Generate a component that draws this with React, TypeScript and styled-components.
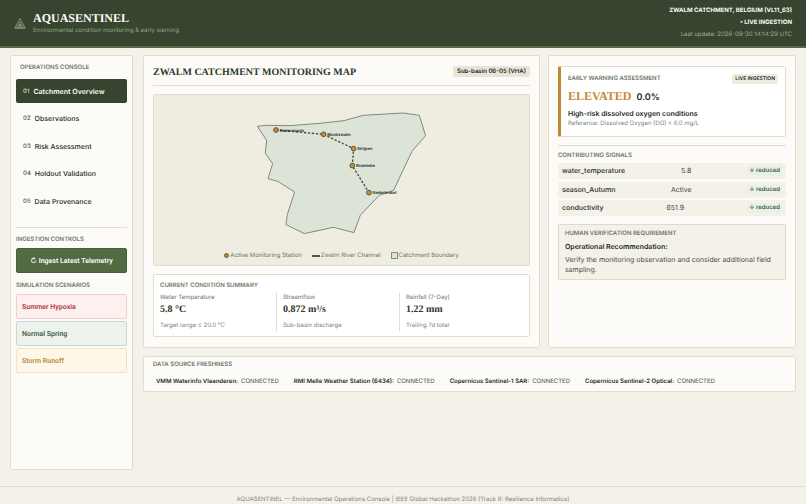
import React from "react";
import styled, { createGlobalStyle, css } from "styled-components";

const sans = `Inter, "Open Sans", "Liberation Sans", sans-serif`;
const serif = `"Liberation Serif", "DejaVu Serif", serif`;

const GlobalStyle = createGlobalStyle`
  *, *::before, *::after { box-sizing: border-box; }
  body {
    margin: 0;
    background: #f4f1e8;
    color: #202b23;
    font-family: ${sans};
    font-size: 7px;
    line-height: 10px;
    text-rendering: geometricPrecision;
  }
  h1, h2, h3, p, ul, dl, dd { margin: 0; padding: 0; }
  button { font-family: inherit; cursor: pointer; text-rendering: inherit; }
`;

const Page = styled.div`
  min-height: 100vh;
  display: flex;
  flex-direction: column;
`;

const Header = styled.header`
  display: flex;
  justify-content: space-between;
  align-items: center;
  height: 48px;
  padding: 0 14px;
  background: #374530;
  border-bottom: 2px solid #566b45;
`;

const Brand = styled.div`
  display: flex;
  align-items: center;
  gap: 7px;
`;

const BrandName = styled.h1`
  font: 700 12px/15px ${serif};
  color: #fcfbf7;
`;

const Tagline = styled.p`
  color: #8ea57c;
  font-size: 6px;
`;

const HeaderStatus = styled.div`
  display: flex;
  flex-direction: column;
  gap: 2px;
  text-align: right;
  color: #fcfbf7;
  font-size: 6px;
  font-weight: 700;
`;

const Updated = styled.span`
  color: #a3b094;
  font-weight: 400;
`;

const Main = styled.main`
  flex: 1;
  display: grid;
  grid-template-columns: 123px minmax(0, 1fr);
  gap: 10px;
  padding: 7px 10px 16px;
`;

const card = css`
  background: #fcfbf7;
  border: 1px solid #e2decf;
  border-radius: 2px;
`;

const Sidebar = styled.aside`
  ${card}
  padding: 7px 5px;
`;

const Label = styled.h3<{ $inset?: boolean }>`
  font-size: 6px;
  line-height: 10px;
  font-weight: 600;
  color: #6d7468;
  text-transform: uppercase;
  padding-left: ${(p) => (p.$inset ? 4 : 0)}px;
`;

const Nav = styled.nav`
  display: flex;
  flex-direction: column;
  justify-content: space-between;
  min-height: 134px;
  margin: 6px 0 14px;
`;

const NavItem = styled.button<{ $active?: boolean }>`
  display: flex;
  align-items: center;
  gap: 4px;
  height: 24px;
  padding: 0 7px;
  border: 0;
  border-radius: 2px;
  background: ${(p) => (p.$active ? "#374530" : "transparent")};
  color: ${(p) => (p.$active ? "#fcfbf7" : "#202b23")};
  font-size: 7px;
  font-weight: ${(p) => (p.$active ? 600 : 500)};
`;

const NavIndex = styled.span`
  font-size: 6px;
  font-weight: 500;
  opacity: 0.8;
`;

const Section = styled.section`
  display: flex;
  flex-direction: column;
  gap: 3px;
`;

const Controls = styled.div`
  display: flex;
  flex-direction: column;
  gap: 8px;
  padding-top: 7px;
  border-top: 1px solid #e2decf;
`;

const PrimaryButton = styled.button`
  height: 25px;
  border: 1px solid #46603a;
  border-radius: 2px;
  background: #536b43;
  color: #fcfbf7;
  font: 600 7px/10px Roboto, ${sans};
`;

const tones = {
  red: ["#fdf0ee", "#f3cfcc", "#b23a3e"],
  green: ["#edf2ec", "#c9d9cb", "#3f6346"],
  amber: ["#fdf7ea", "#f3e3c1", "#c08a3e"],
};

const Scenarios = styled.div`
  display: flex;
  flex-direction: column;
  gap: 2px;
`;

const ScenarioButton = styled.button<{ $tone: keyof typeof tones }>`
  height: 25px;
  padding: 0 5px;
  text-align: left;
  background: ${(p) => tones[p.$tone][0]};
  border: 1px solid ${(p) => tones[p.$tone][1]};
  border-radius: 2px;
  color: ${(p) => tones[p.$tone][2]};
  font: 600 7px/10px Roboto, ${sans};
`;

const Content = styled.div`
  display: grid;
  grid-template-columns: minmax(0, 1.6fr) minmax(0, 1fr);
  gap: 8px;
  align-content: start;
`;

const Panel = styled.section`
  ${card}
  display: flex;
  flex-direction: column;
  gap: 8px;
  padding: 10px 9px;
`;

const PanelHead = styled.div`
  display: flex;
  justify-content: space-between;
  align-items: flex-start;
  padding-bottom: 5px;
  border-bottom: 1px solid #e2decf;
`;

const PanelTitle = styled.h2`
  font: 700 10px/14px ${serif};
  color: #2c3929;
`;

const Badge = styled.span`
  padding: 0 4px;
  border-radius: 2px;
  background: #e8e4d7;
  font-size: 6px;
  line-height: 11px;
  font-weight: 600;
`;

const LiveBadge = styled(Badge)`
  padding: 0 3px;
  background: #efede1;
  font-size: 5px;
  line-height: 10px;
`;

const MapBox = styled.figure`
  margin: 0;
  padding-bottom: 4px;
  background: #efede1;
  border: 1px solid #dfdbcb;
  border-radius: 2px;
  svg { display: block; width: 100%; }
`;

const Legend = styled.figcaption`
  display: flex;
  justify-content: center;
  gap: 10px;
  margin-top: 4px;
  color: #6d7468;
  font-size: 6px;
`;

const LegendItem = styled.span`
  display: flex;
  align-items: center;
  gap: 1px;
`;

const Swatch = styled.i<{ $kind: "dot" | "line" | "area" }>`
  ${(p) =>
    p.$kind === "dot"
      ? css`width: 5px; height: 5px; border-radius: 50%; background: #c08a35; border: 1px solid #6b6033;`
      : p.$kind === "line"
        ? css`width: 8px; height: 2px; background: #46603a;`
        : css`width: 7px; height: 7px; background: #d9e4d6; border: 1px solid #7f9277;`}
`;

const Summary = styled.div`
  padding: 6px 6px 5px;
  background: #fff;
  border: 1px solid #e2decf;
  border-radius: 2px;
`;

const Metrics = styled.dl`
  display: grid;
  grid-template-columns: repeat(3, minmax(0, 1fr));
  gap: 6px;
  margin-top: 2px;
`;

const Metric = styled.div`
  color: #6d7468;
  font-size: 6px;
  border-right: 1px solid #e2decf;
  &:last-child { border-right: 0; }
`;

const MetricValue = styled.dd`
  font: 700 10px/14px ${serif};
  color: #2c3929;
`;

const MetricNote = styled.dd`
  margin-top: 4px;
  color: #80867a;
`;

const Assessment = styled.div`
  padding: 7px;
  background: #fff;
  border: 1px solid #e2decf;
  border-left: 3px solid #c08a35;
  border-radius: 2px;
`;

const Between = styled.div`
  display: flex;
  justify-content: space-between;
  align-items: center;
`;

const Level = styled.p`
  display: flex;
  align-items: baseline;
  gap: 5px;
  margin: 4px 0 3px;
  font: 700 12px/16px ${serif};
  color: #c08a35;
`;

const Score = styled.span`
  font: 600 9px/16px ${sans};
  color: #202b23;
`;

const Finding = styled.p`
  font-weight: 600;
`;

const Reference = styled.p`
  color: #80867a;
  font-size: 6px;
`;

const Signals = styled.div`
  display: flex;
  flex-direction: column;
  gap: 2px;
  padding-top: 5px;
  border-top: 1px solid #e2decf;
`;

const SignalTable = styled.table`
  display: block;
  tbody {
    display: flex;
    flex-direction: column;
    justify-content: space-between;
    min-height: 53px;
  }
`;

const SignalRow = styled.tr`
  display: flex;
  justify-content: space-between;
  align-items: center;
  height: 16px;
  padding: 0 4px;
  background: #f4f1e8;
  border-radius: 2px;
  th { padding: 0; font-weight: 500; text-align: left; }
  td { padding: 0; color: #454e45; }
`;

const Effect = styled.span`
  display: block;
  padding: 0 2px;
  border-radius: 2px;
  background: #e9f0e5;
  color: #3f6346;
  font-size: 6px;
  font-weight: 600;
`;

const Verification = styled.div`
  display: flex;
  flex-direction: column;
  gap: 3px;
  padding: 4px 6px;
  background: #f4f1e8;
  border: 1px solid #dfdbcb;
  border-radius: 2px;
  color: #454e45;
`;

const Strong = styled.strong`
  font-weight: 600;
  color: #202b23;
`;

const Freshness = styled.section`
  ${card}
  grid-column: 1 / -1;
  padding: 3px 9px 4px;
`;

const Sources = styled.ul`
  display: flex;
  flex-wrap: wrap;
  gap: 15px;
  margin-top: 7px;
  padding: 0 3px;
  list-style: none;
  font-size: 6px;
  color: #454e45;
  li { display: flex; gap: 3px; }
`;

const Footer = styled.footer`
  padding-top: 8px;
  border-top: 1px solid #e2decf;
  text-align: center;
  color: #80867a;
  font-size: 6px;
  line-height: 9px;
`;

const navItems = [
  "Catchment Overview",
  "Observations",
  "Risk Assessment",
  "Holdout Validation",
  "Data Provenance",
];

const stations: [string, number, number][] = [
  ["Nederzwalm", 108, 90],
  ["Munkzwalm", 251, 103],
  ["Strijpen", 341, 146],
  ["Rozebeke", 337, 197],
  ["Nederbrakel", 387, 278],
];

const metrics = [
  ["Water Temperature", "5.8 °C", "Target range ≤ 20.0 °C"],
  ["Streamflow", "0.872 m³/s", "Sub-basin discharge"],
  ["Rainfall (7-Day)", "1.22 mm", "Trailing 7d total"],
];

const signals = [
  ["water_temperature", "5.8"],
  ["season_Autumn", "Active"],
  ["conductivity", "651.9"],
];

const sources = [
  "VMM Waterinfo Vlaanderen:",
  "RMI Melle Weather Station (6434):",
  "Copernicus Sentinel-1 SAR:",
  "Copernicus Sentinel-2 Optical:",
];

function Logo() {
  return (
    <svg width="12" height="12" viewBox="0 0 36 36" fill="none" stroke="#a3b094" strokeWidth="2" aria-hidden="true">
      <path d="M18 4 34 34H2Z" />
      <path d="M18 14 28 31H8Z" />
      <path d="M18 21v8M14 30l4-8 4 8" />
    </svg>
  );
}

function CatchmentMap() {
  return (
    <svg viewBox="-258 -15 1125 456" role="img" aria-label="Zwalm catchment">
      <path
        d="M52 79 77 76 150 77 240 70 312 62 370 46 490 39 538 46 557 107 516 154 461 271 418 286 361 346 342 398 280 382 193 401 138 374 142 344 164 276 113 244 84 236 98 191 76 160 80 121Z"
        fill="#dce3d7"
        stroke="#7f8a76"
        strokeWidth="3"
        strokeLinejoin="round"
      />
      <polyline
        points={stations.map(([, x, y]) => `${x},${y}`).join(" ")}
        fill="none"
        stroke="#3d5236"
        strokeWidth="4"
        strokeDasharray="7 5"
      />
      {stations.map(([name, x, y]) => (
        <g key={name}>
          <circle cx={x} cy={y} r="7" fill="#c99136" stroke="#5a5330" strokeWidth="3" />
          <text x={x + 11} y={y + 5} fontSize="12" fontWeight="600" fill="#202b23">
            {name}
          </text>
        </g>
      ))}
    </svg>
  );
}

export default function App() {
  return (
    <>
      <GlobalStyle />
      <Page>
        <Header>
          <Brand>
            <Logo />
            <div>
              <BrandName>AQUASENTINEL</BrandName>
              <Tagline>Environmental condition monitoring &amp; early warning</Tagline>
            </div>
          </Brand>
          <HeaderStatus>
            <span>ZWALM CATCHMENT, BELGIUM (VL11_63)</span>
            <span>• LIVE INGESTION</span>
            <Updated>Last update: 2026-09-30 14:14:29 UTC</Updated>
          </HeaderStatus>
        </Header>
        <Main>
          <Sidebar>
            <Label $inset>Operations Console</Label>
            <Nav>
              {navItems.map((item, i) => (
                <NavItem key={item} $active={i === 0}>
                  <NavIndex>0{i + 1}</NavIndex>
                  {item}
                </NavItem>
              ))}
            </Nav>
            <Controls>
              <Section>
                <Label>Ingestion Controls</Label>
                <PrimaryButton>↻ Ingest Latest Telemetry</PrimaryButton>
              </Section>
              <Section>
                <Label>Simulation Scenarios</Label>
                <Scenarios>
                  <ScenarioButton $tone="red">Summer Hypoxia</ScenarioButton>
                  <ScenarioButton $tone="green">Normal Spring</ScenarioButton>
                  <ScenarioButton $tone="amber">Storm Runoff</ScenarioButton>
                </Scenarios>
              </Section>
            </Controls>
          </Sidebar>
          <Content>
            <Panel>
              <PanelHead>
                <PanelTitle>ZWALM CATCHMENT MONITORING MAP</PanelTitle>
                <Badge>Sub-basin 06-05 (VHA)</Badge>
              </PanelHead>
              <MapBox>
                <CatchmentMap />
                <Legend>
                  <LegendItem><Swatch $kind="dot" />Active Monitoring Station</LegendItem>
                  <LegendItem><Swatch $kind="line" />Zwalm River Channel</LegendItem>
                  <LegendItem><Swatch $kind="area" />Catchment Boundary</LegendItem>
                </Legend>
              </MapBox>
              <Summary>
                <Label>Current Condition Summary</Label>
                <Metrics>
                  {metrics.map(([name, value, note]) => (
                    <Metric key={name}>
                      <dt>{name}</dt>
                      <MetricValue>{value}</MetricValue>
                      <MetricNote>{note}</MetricNote>
                    </Metric>
                  ))}
                </Metrics>
              </Summary>
            </Panel>
            <Panel>
              <Assessment>
                <Between>
                  <Label>Early Warning Assessment</Label>
                  <LiveBadge>LIVE INGESTION</LiveBadge>
                </Between>
                <Level>
                  ELEVATED <Score>0.0%</Score>
                </Level>
                <Finding>High-risk dissolved oxygen conditions</Finding>
                <Reference>Reference: Dissolved Oxygen (DO) &lt; 6.0 mg/L</Reference>
              </Assessment>
              <Signals>
                <Label>Contributing Signals</Label>
                <SignalTable>
                  <tbody>
                    {signals.map(([name, value]) => (
                      <SignalRow key={name}>
                        <th scope="row">{name}</th>
                        <td>{value}</td>
                        <td><Effect>↓ reduced</Effect></td>
                      </SignalRow>
                    ))}
                  </tbody>
                </SignalTable>
              </Signals>
              <Verification>
                <Label>Human Verification Requirement</Label>
                <Strong>Operational Recommendation:</Strong>
                <p>Verify the monitoring observation and consider additional field sampling.</p>
              </Verification>
            </Panel>
            <Freshness>
              <Label>Data Source Freshness</Label>
              <Sources>
                {sources.map((name) => (
                  <li key={name}>
                    <Strong>{name}</Strong>
                    <span>CONNECTED</span>
                  </li>
                ))}
              </Sources>
            </Freshness>
          </Content>
        </Main>
        <Footer>
          AQUASENTINEL — Environmental Operations Console | IEEE Global Hackathon 2026 (Track 6: Resilience Informatics)
        </Footer>
      </Page>
    </>
  );
}
